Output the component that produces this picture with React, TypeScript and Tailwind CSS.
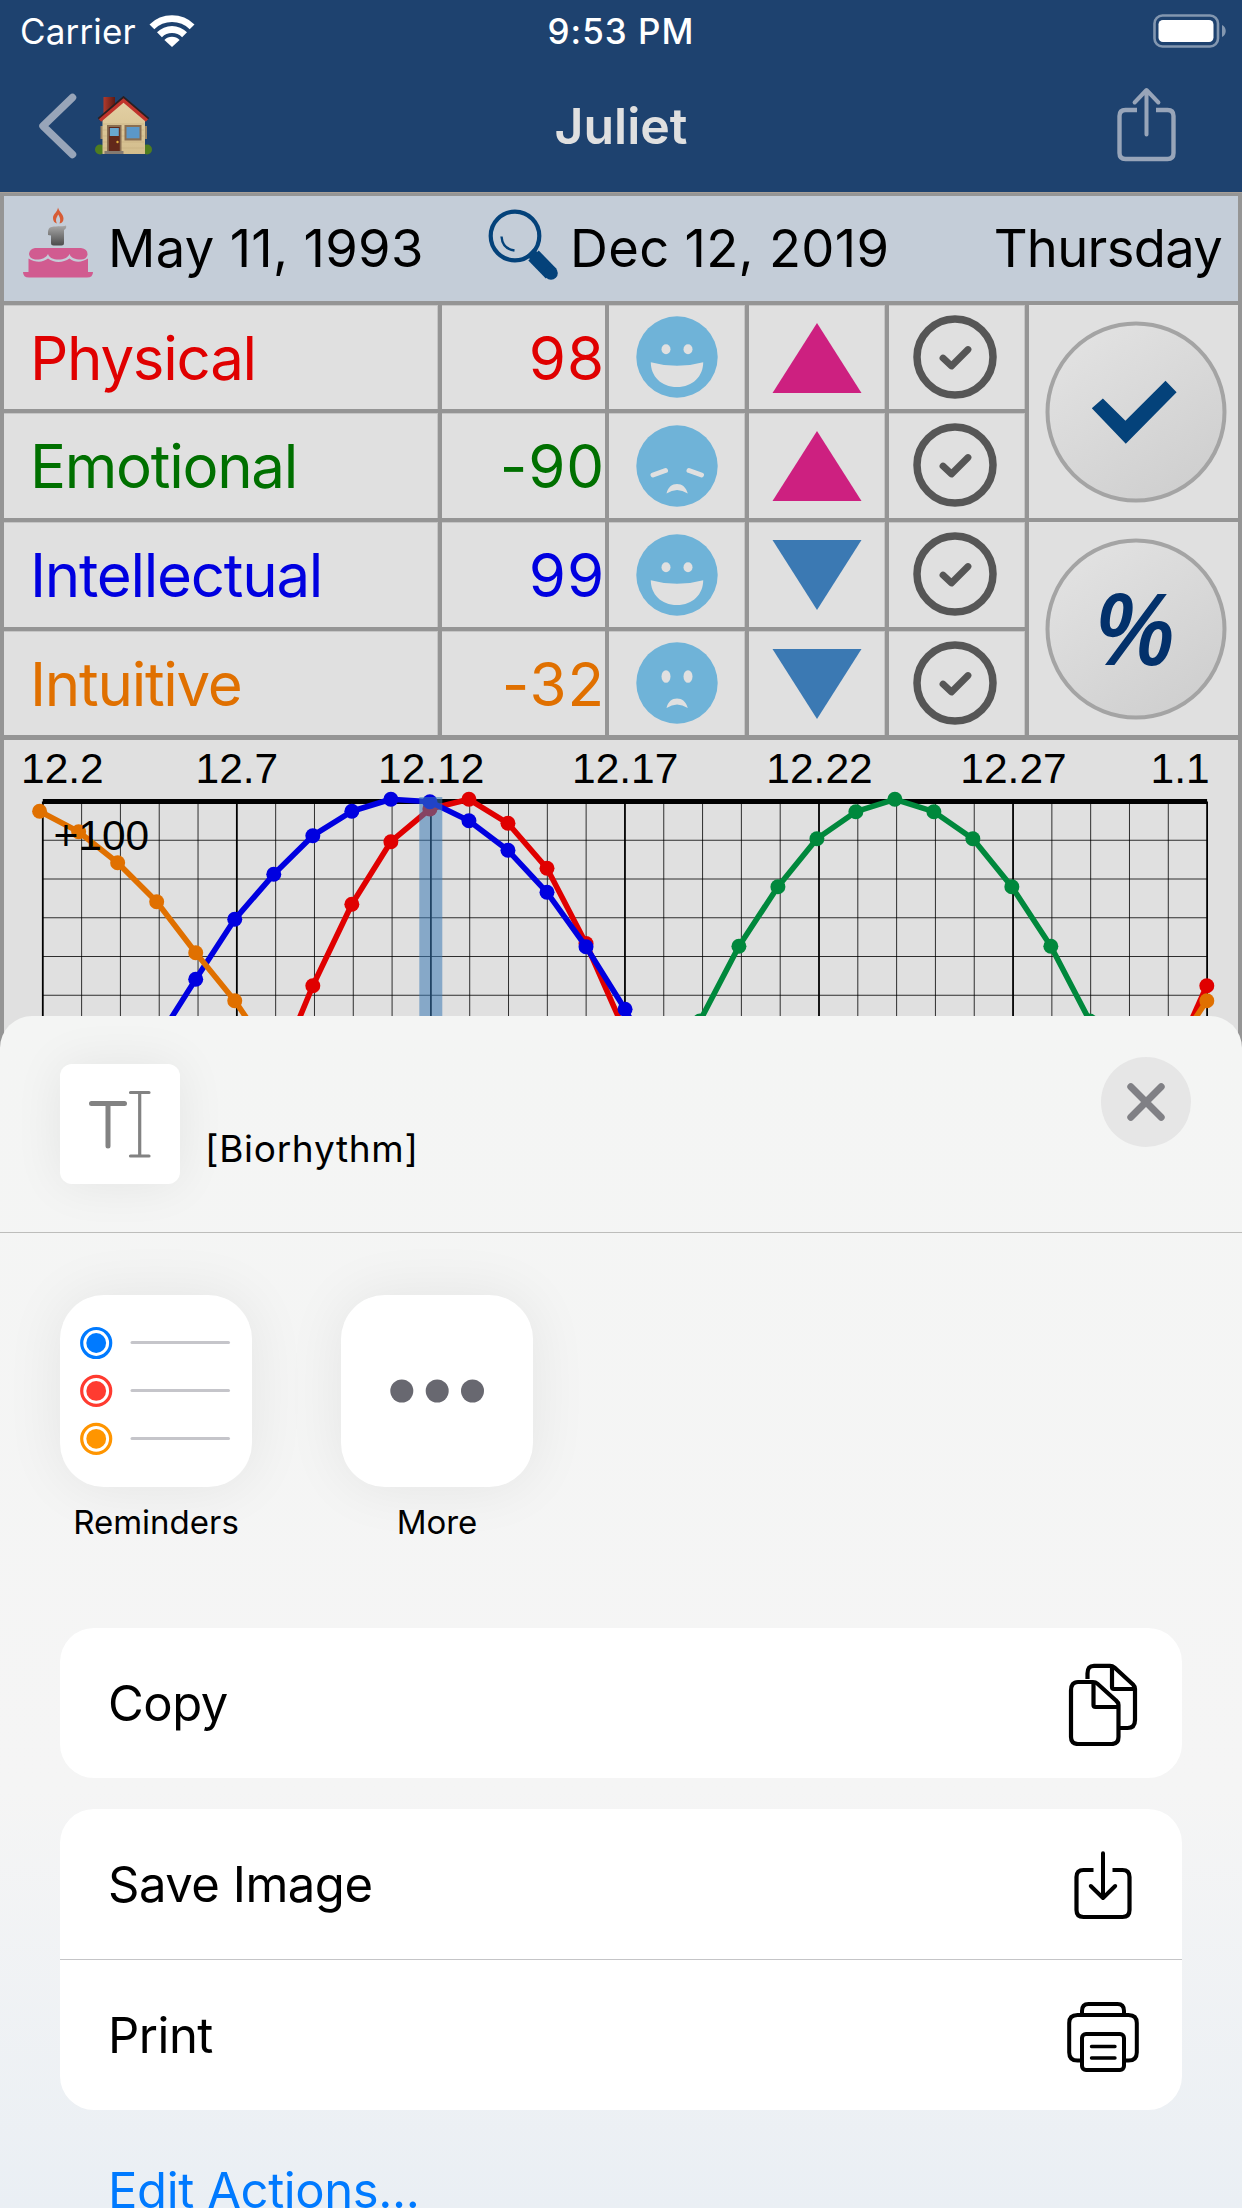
import { ReactNode } from "react";

type Mood = "happy" | "upset" | "sad";

interface Rhythm {
  name: string;
  value: number;
  color: string;
  mood: Mood;
  rising: boolean;
}

const RHYTHMS: Rhythm[] = [
  { name: "Physical", value: 98, color: "text-[#e00000]", mood: "happy", rising: true },
  { name: "Emotional", value: -90, color: "text-[#007000]", mood: "upset", rising: true },
  { name: "Intellectual", value: 99, color: "text-[#0000e0]", mood: "happy", rising: false },
  { name: "Intuitive", value: -32, color: "text-[#e07000]", mood: "sad", rising: false },
];

// Chart geometry, in the chart's own pixels
const CHART_LEFT = 42.8;
const DAY_WIDTH = 38.81;
const TOP_LINE = 61.5;

const DATE_LABELS = [
  { text: "12.2", x: 21 },
  { text: "12.7", x: 195.5 },
  { text: "12.12", x: 378 },
  { text: "12.17", x: 572 },
  { text: "12.22", x: 766.3 },
  { text: "12.27", x: 960.3 },
  { text: "1.1", x: 1150.5 },
];

// Each series starts at day `from`; values are y positions
const SERIES = [
  { color: "#e00000", from: 6, ys: [340, 245.7, 164.3, 101.7, 69, 59.3, 83.3, 128.3, 203.5, 292] },
  { color: "#e00000", from: 29, ys: [333, 245.7] },
  { color: "#00883c", from: 17, ys: [281, 206.3, 146.7, 98.7, 71.7, 59.3, 71.7, 98.7, 146.7, 206.3, 281, 366] },
  { color: "#0000e0", from: 3, ys: [301, 239.3, 179.3, 134.3, 95.7, 71.3, 59.3, 61.7, 80.7, 110.3, 152.3, 206.7, 269.3, 335] },
  { color: "#e07000", from: 0, ys: [71.3, 91.7, 122.7, 161.7, 212.7, 260.7, 318] },
  { color: "#e07000", from: 29, ys: [320, 260.7] },
];

// Points are pinned to both ends of the axis, slightly off the grid
const dayX = (day: number) => (day < 16 ? 39.6 + 39.03 * day : 1206.8 - 38.99 * (30 - day));

function Wifi() {
  return (
    <svg width="46" height="34" viewBox="0 0 46 34" fill="none">
      <path d="M0.5 11.5a31.8 31.8 0 0 1 45 0l-4.8 4.8a25 25 0 0 0-35.4 0z" fill="#fff" />
      <path d="M8 19.3a21.2 21.2 0 0 1 30 0l-4.9 4.9a14.3 14.3 0 0 0-20.2 0z" fill="#fff" />
      <path d="M15.4 27a10.8 10.8 0 0 1 15.2 0L23 34z" fill="#fff" />
    </svg>
  );
}

function Battery() {
  return (
    <svg width="74" height="34" viewBox="0 0 74 34" fill="none">
      <rect x="1.5" y="1.5" width="63.5" height="31" rx="8" stroke="#8397b0" strokeWidth="2.6" />
      <rect x="5.5" y="6" width="55" height="22" rx="4.5" fill="#fff" />
      <path d="M69 11c5 2 5 10 0 12z" fill="#8397b0" />
    </svg>
  );
}

function House() {
  return (
    <svg width="60" height="60" viewBox="0 0 60 60">
      <defs>
        <linearGradient id="wall" x1="0" y1="0" x2="0" y2="1">
          <stop offset="0" stopColor="#e3d0a4" />
          <stop offset="1" stopColor="#d3bd8c" />
        </linearGradient>
        <linearGradient id="chimney" x1="0" y1="0" x2="1" y2="0">
          <stop offset="0" stopColor="#b23a2c" />
          <stop offset="1" stopColor="#5c1a14" />
        </linearGradient>
      </defs>
      <rect x="9.5" y="1" width="11.5" height="17" fill="url(#chimney)" />
      <circle cx="6" cy="53.5" r="5" fill="#4f7d1f" />
      <circle cx="53" cy="53.5" r="5" fill="#4f7d1f" />
      <rect x="6.5" y="30" width="3" height="13" fill="#9b8463" />
      <rect x="50" y="30" width="3" height="13" fill="#9b8463" />
      <path d="M8.5 22L29.5 4L51 22V58H8.5z" fill="url(#wall)" />
      <path d="M9 28h41M9 34h41M9 40h41M9 46h41M9 52h41" stroke="#c6af80" strokeWidth="0.6" />
      <path d="M5 23.5L29.5 2.5L54 23.5" fill="none" stroke="#2b1f20" strokeWidth="4" />
      <path d="M6 24.5L29.5 4.5L53 24.5" fill="none" stroke="#c0342c" strokeWidth="3.6" />
      <rect x="13" y="29" width="14.5" height="26" fill="#8a6f52" />
      <rect x="14.8" y="31" width="11" height="24" fill="#62281a" />
      <rect x="15.8" y="32" width="9" height="8" fill="#69a8cf" />
      <circle cx="23.5" cy="46" r="1.2" fill="#e0ae3c" />
      <rect x="30.5" y="29" width="17" height="15.5" fill="#8a6f52" />
      <rect x="32.5" y="31" width="13" height="11.3" fill="#5b98c9" />
      <rect x="10.5" y="55" width="19" height="3" fill="#857a70" />
    </svg>
  );
}

function ShareIcon() {
  return (
    <svg width="60" height="76" viewBox="0 0 60 76" fill="none" stroke="#98a5b9" strokeWidth="4.4">
      <path d="M21 24H9.5Q3.5 24 3.5 30V67Q3.5 73 9.5 73H51.5Q57.5 73 57.5 67V30Q57.5 24 51.5 24H40" />
      <path d="M30.5 48.5V5M18.6 16.5L30.5 4L42.4 16.5" strokeWidth="4" strokeLinecap="round" strokeLinejoin="round" />
    </svg>
  );
}

function Cake() {
  return (
    <svg width="70" height="71" viewBox="0 0 70 71">
      <defs>
        <linearGradient id="candle" x1="0" y1="0" x2="0" y2="1">
          <stop offset="0" stopColor="#a8a8a8" />
          <stop offset="1" stopColor="#4c4c4c" />
        </linearGradient>
      </defs>
      <path d="M35 0.5C36 5 40.5 7 40.5 11.5C40.5 14.5 39 16 36.5 16.5C38 13 37 10.5 35.3 7.5C33.5 10.500 32 13 34 16.5C31.5 16 30 14 30 11C30 7 34.5 5 35 0.5z" fill="#d75c35" />
      <path d="M27 20.5C31 18.5 39 20 43 18.5Q44 21 41 23V36Q41 38.5 38.5 38.5H30.5Q28 38.5 28 36V28.5L25 28Q24.5 22 27 20.5z" fill="url(#candle)" />
      <path d="M12 41H58Q65 42 64.5 48Q63 52.5 58 52.5C52 52.5 48 51 46.5 47C44.5 51 41 52.5 35.5 52.5C30 52.5 26.5 51 25 47C23 51 18 53 12 52.5Q6.5 51.5 6 47Q6.5 42 12 41z" fill="#d15b90" />
      <path d="M5.5 51.5C13 56 20 55.5 25 51.5C31 56 40 56 46.5 51.5C52 56 59 55.5 65 51.5V65H70Q70 70.5 64 70.5H6Q0 70.5 0 65H5.5z" fill="#d15b90" />
    </svg>
  );
}

function Magnifier() {
  return (
    <svg width="72" height="72" viewBox="0 0 72 72" fill="none" stroke="#04427a">
      <circle cx="27" cy="27" r="24.3" strokeWidth="4.2" />
      <path d="M13.5 27.5Q14.5 40 26.5 41.5" strokeWidth="2.4" />
      <path d="M45.5 46.500L63 64.5" strokeWidth="14.5" />
      <circle cx="63" cy="64" r="6.8" fill="#04427a" stroke="none" />
      <path d="M42 43L47 48" strokeWidth="10" />
    </svg>
  );
}

function Face({ mood }: { mood: Mood }) {
  return (
    <svg width="82" height="82" viewBox="0 0 82 82" fill="#e0e0e0">
      <circle cx="41" cy="41" r="40.7" fill="#6fb3d8" />
      {mood === "happy" && (
        <>
          <ellipse cx="30" cy="33.3" rx="4.5" ry="5" />
          <ellipse cx="52" cy="33.3" rx="4.5" ry="5" />
          <path d="M14.800 46.2Q41 53.5 67.2 46.2C67.2 60 57 71 41 71C25 71 14.8 60 14.8 46.2z" />
        </>
      )}
      {mood === "upset" && (
        <>
          <path d="M17 50L29.5 45.5M65.5 50L53 45.5" stroke="#e0e0e0" strokeWidth="5" strokeLinecap="round" />
          <path d="M30.5 68.5C32 62 36 59 41 59C46 59 50 62 51.8 68.5Q41 61.5 30.5 68.5z" />
        </>
      )}
      {mood === "sad" && (
        <>
          <ellipse cx="30" cy="34.5" rx="4.5" ry="6.3" />
          <ellipse cx="52" cy="34.5" rx="4.5" ry="6.3" />
          <path d="M30.5 66C32 59.5 36 56.5 41 56.5C46 56.5 50 59.5 51.8 66Q41 59 30.5 66z" />
        </>
      )}
    </svg>
  );
}

function Trend({ rising }: { rising: boolean }) {
  return (
    <svg width="90" height="70" viewBox="0 0 90 70">
      {rising ? <path d="M45 0L89.5 70H0.5z" fill="#cd2080" /> : <path d="M45 70L89.5 0H0.5z" fill="#3b79b3" />}
    </svg>
  );
}

function CheckRing() {
  return (
    <svg width="84" height="84" viewBox="0 0 84 84" fill="none" stroke="#565656">
      <circle cx="42" cy="42" r="38" strokeWidth="7.5" />
      <path d="M30 43L38.5 51L55 34.5" strokeWidth="6.8" strokeLinecap="round" strokeLinejoin="round" />
    </svg>
  );
}

function RoundButton({ children }: { children: ReactNode }) {
  return (
    <svg className="ml-[5px] mt-px" width="182" height="182" viewBox="0 0 182 182">
      <defs>
        <linearGradient id="knob" x1="0.2" y1="0.1" x2="0.8" y2="0.95">
          <stop offset="0" stopColor="#e1e1e1" />
          <stop offset="1" stopColor="#cfcfcf" />
        </linearGradient>
      </defs>
      <circle cx="91" cy="91" r="88.5" fill="url(#knob)" stroke="#a4a4a4" strokeWidth="4" />
      {children}
    </svg>
  );
}

function Chart() {
  const days = Array.from({ length: 31 }, (_, i) => i);
  const right = CHART_LEFT + DAY_WIDTH * 30;
  return (
    <svg width="1234" height="320" viewBox="4 0 1234 320" className="block bg-[#e0e0e0]">
      {days.map((d) => (
        <path
          key={d}
          d={`M${CHART_LEFT + DAY_WIDTH * d} ${TOP_LINE}V320`}
          stroke="#000"
          strokeWidth={d % 5 === 0 ? 1.8 : 0.8}
        />
      ))}
      {[1, 2, 3, 4, 5, 6].map((n) => (
        <path key={n} d={`M${CHART_LEFT} ${TOP_LINE + 38.75 * n}H${right}`} stroke="#000" strokeWidth="0.8" />
      ))}
      <path d={`M${CHART_LEFT} ${TOP_LINE}H${right}`} stroke="#000" strokeWidth="5" />
      {SERIES.map((s, i) => (
        <g key={i} fill={s.color}>
          <polyline
            points={s.ys.map((y, j) => `${dayX(s.from + j)},${y}`).join(" ")}
            fill="none"
            stroke={s.color}
            strokeWidth="5.6"
            strokeLinejoin="round"
          />
          {s.ys.map((y, j) => (
            <circle key={j} cx={dayX(s.from + j)} cy={y} r="7.5" />
          ))}
        </g>
      ))}
      <rect x="419.3" y="57" width="23" height="263" fill="#3c7ab4" fillOpacity="0.55" />
      <g fontFamily="'Liberation Sans', sans-serif" fontSize="42.5">
        {DATE_LABELS.map((l) => (
          <text key={l.text} x={l.x} y="43.3">
            {l.text}
          </text>
        ))}
        <text x="53.5" y="110">+100</text>
      </g>
    </svg>
  );
}

function CopyIcon() {
  return (
    <svg width="76" height="84" viewBox="0 0 76 84" fill="none" stroke="#000" strokeWidth="4.2" strokeLinejoin="round">
      <path d="M24.5 17V11.5Q24.5 3.8 31 3.8H47Q49.5 3.8 51.5 5.5L70 22.5Q72 24.5 72 27V58Q72 66 64.5 66H56" />
      <path d="M49 5V25Q49 27 51 27H71" />
      <path d="M8 28.5Q8 20 15 20H30Q32.5 20 34.5 21.8L53 38.5Q55.5 40.5 55.5 43V75Q55.5 82 48.5 82H15Q8 82 8 75z" />
      <path d="M30.5 21V43Q30.5 45 32.5 45H54.5" />
    </svg>
  );
}

function SaveIcon() {
  return (
    <svg width="60" height="72" viewBox="0 0 60 72" fill="none" stroke="#000" strokeWidth="4.2">
      <path d="M20.5 21H10.5Q3.5 21 3.5 28V61Q3.5 68 10.5 68H49.5Q56.5 68 56.5 61V28Q56.5 21 49.5 21H39.5" />
      <path d="M30 4.2V48.5M17.8 37L30 49L42.2 37" strokeWidth="4" strokeLinecap="round" strokeLinejoin="round" />
    </svg>
  );
}

function PrintIcon() {
  return (
    <svg width="72" height="70" viewBox="0 0 72 70" fill="none" stroke="#000" strokeWidth="4">
      <path d="M15 12V9Q15 2 21.5 2H50.5Q57 2 57 9V12" />
      <path d="M15 58.5H10.5Q2.2 58.5 2.2 50.5V21Q2.2 13 10.5 13H61.5Q69.8 13 69.8 21V50.5Q69.8 58.5 61.5 58.5H57" />
      <rect x="15" y="32" width="42" height="36" rx="4" />
      <path d="M24.5 44.5H48M24.5 56H48" strokeWidth="3.4" strokeLinecap="round" />
    </svg>
  );
}

function ActionRow({ label, icon, slot }: { label: string; icon: ReactNode; slot: string }) {
  return (
    <div className="flex h-[150px] items-center justify-between pl-12">
      <span className="text-[49px] leading-none tracking-[-0.01em]">{label}</span>
      <span className={slot}>{icon}</span>
    </div>
  );
}

function ShareTile({ label, children }: { label: string; children: ReactNode }) {
  return (
    <div className="flex w-[192px] flex-col items-center">
      <div className="flex h-48 w-48 items-center justify-center rounded-[44px] bg-white shadow-[0_0_60px_rgba(0,0,0,0.07)]">
        {children}
      </div>
      <span className="mt-[15px] text-[33px] leading-10">{label}</span>
    </div>
  );
}

export default function App() {
  return (
    <div className="flex h-[2208px] w-[1242px] flex-col overflow-hidden bg-[#959595] font-['Inter',sans-serif] text-black">
      {/* Status bar + navigation */}
      <header className="h-[193px] shrink-0 border-b border-[#a8a098] bg-[#1e426f]">
        <div className="grid h-[62px] grid-cols-3 items-center px-5 text-white">
          <div className="flex items-center gap-[13px]">
            <span className="text-[35px] leading-none tracking-[0.005em]">Carrier</span>
            <span className="-mt-0.5"><Wifi /></span>
          </div>
          <span className="text-center text-[35px] font-medium leading-none tracking-[0.028em]">9:53 PM</span>
          <span className="-mr-[5px] flex justify-end"><Battery /></span>
        </div>
        <div className="grid h-32 grid-cols-3 items-center px-[37px]">
          <div className="flex items-center gap-[17px]">
            <svg width="40" height="66" viewBox="0 0 40 66" fill="none">
              <path d="M35.5 4.5L6 33L35.5 61.5" stroke="#98a5b9" strokeWidth="7.5" strokeLinecap="round" strokeLinejoin="round" />
            </svg>
            <House />
          </div>
          <span className="text-center text-[50px] font-semibold leading-none text-[#e0e0e0]">Juliet</span>
          <span className="-mt-[5px] mr-[29px] flex justify-end"><ShareIcon /></span>
        </div>
      </header>

      {/* Dates */}
      <div className="mx-1 mt-[3px] flex h-[105px] shrink-0 items-center bg-[#c4cdd8] text-[52.5px] leading-none tracking-[0.006em]">
        <div className="flex w-[484px] items-center pl-[19px]">
          <span className="-mt-3"><Cake /></span>
          <span className="ml-[15px]">May 11, 1993</span>
        </div>
        <div className="flex items-center">
          <span className="-mt-2"><Magnifier /></span>
          <span className="ml-[10px]">Dec 12, 2019</span>
        </div>
        <span className="ml-auto pr-4 tracking-[-0.013em]">Thursday</span>
      </div>

      {/* Rhythm table */}
      <div className="mx-1 mt-1 flex h-[430px] shrink-0 gap-1">
        <div className="grid w-[1021px] grid-cols-[434px_163px_136px_136px_136px] grid-rows-[104px_105px_105px_104px] gap-1">
          {RHYTHMS.map((r) => (
            <div key={r.name} className="contents">
              <div className={`flex items-center border-r border-t border-[#c6c6c6] bg-[#e0e0e0] pl-[26px] text-[60px] leading-none tracking-[-0.021em] ${r.color}`}>
                {r.name}
              </div>
              <div className={`flex items-center justify-end border-t border-[#c6c6c6] bg-[#e0e0e0] text-[60px] leading-none tracking-[0.015em] ${r.color}`}>
                {r.value}
              </div>
              <div className="flex items-center justify-center border-r border-t border-[#c6c6c6] bg-[#e0e0e0] pb-px">
                <Face mood={r.mood} />
              </div>
              <div className="flex items-center justify-center border-r border-t border-[#c6c6c6] bg-[#e0e0e0]">
                <Trend rising={r.rising} />
              </div>
              <div className="flex items-center justify-center border-r border-t border-[#c6c6c6] bg-[#e0e0e0] pb-0.5 pr-[3px]">
                <CheckRing />
              </div>
            </div>
          ))}
        </div>
        <div className="grid w-[209px] grid-rows-2 gap-1">
          <div className="flex items-center justify-center bg-[#e0e0e0]">
            <RoundButton>
              <path d="M46.8 87.2L57.9 77.5L80.4 99.8L120.5 59.8L131.6 71.2L80.8 122.8z" fill="#04427a" />
            </RoundButton>
          </div>
          <div className="flex items-center justify-center bg-[#e0e0e0]">
            <RoundButton>
              <text x="89.5" y="127" textAnchor="middle" fontFamily="'Open Sans', sans-serif" fontSize="99" fontWeight="600" fontStyle="italic" fill="#03316b">
                %
              </text>
            </RoundButton>
          </div>
        </div>
      </div>

      {/* Biorhythm curves, partly covered by the share sheet */}
      <div className="mx-1 mt-[5px] h-[320px] shrink-0">
        <Chart />
      </div>

      {/* Share sheet */}
      <section className="relative -mt-11 flex h-[1192px] shrink-0 flex-col rounded-t-[32px] bg-linear-to-b from-[#f4f5f4] via-[#f5f5f5] via-65% to-[#eaeff4]">
        <div className="flex h-[217px] shrink-0 border-b border-[#bdbdbb] pl-[60px] pr-[51px]">
          <div className="mt-12 flex h-[120px] w-[120px] items-center justify-center rounded-xl bg-white shadow-[0_0_50px_rgba(0,0,0,0.07)]">
            <svg width="64" height="68" viewBox="0 0 64 68" fill="none" stroke="#828282" strokeLinecap="round">
              <path d="M3.5 13.6H36.5M20 13.6V56" strokeWidth="5" />
              <path d="M42.5 2.5H61M42.5 66H61M51.7 2.5V66" strokeWidth="3.2" />
            </svg>
          </div>
          <span className="ml-[25px] mt-[111px] text-[37px] leading-[44px] tracking-[0.019em]">[Biorhythm]</span>
          <div className="ml-auto mt-[41px] flex h-[90px] w-[90px] items-center justify-center rounded-full bg-[#e6e6e6]">
            <svg width="38" height="38" viewBox="0 0 38 38" stroke="#808085" strokeWidth="7" strokeLinecap="round">
              <path d="M3.8 3.8L34.2 34.2M34.2 3.8L3.8 34.2" />
            </svg>
          </div>
        </div>

        <div className="flex gap-[89px] pl-[60px] pt-[62px]">
          <ShareTile label="Reminders">
            <svg width="192" height="192" viewBox="0 0 192 192">
              {["#007aff", "#ff3b30", "#ff9500"].map((color, i) => (
                <g key={color}>
                  <circle cx="36.2" cy={48 + i * 47.9} r="14.5" fill="none" stroke={color} strokeWidth="3.2" />
                  <circle cx="36.2" cy={48 + i * 47.9} r="9.9" fill={color} />
                  <path d={`M72 ${47.5 + i * 48}H168.5`} stroke="#c5c5ca" strokeWidth="3" strokeLinecap="round" />
                </g>
              ))}
            </svg>
          </ShareTile>
          <ShareTile label="More">
            <svg width="96" height="24" viewBox="0 0 96 24" fill="#686870">
              <circle cx="12.8" cy="12" r="11.5" />
              <circle cx="48.2" cy="12" r="11.5" />
              <circle cx="83.5" cy="12" r="11.5" />
            </svg>
          </ShareTile>
        </div>

        <div className="mx-[60px] mt-[86px] rounded-[34px] bg-white">
          <ActionRow label="Copy" icon={<CopyIcon />} slot="mr-[43px] mt-0.5" />
        </div>
        <div className="mx-[60px] mt-[31px] rounded-[34px] bg-white">
          <ActionRow label="Save Image" icon={<SaveIcon />} slot="mr-[49px] mt-0.5" />
          <div className="h-px bg-[#c5c5c7]" />
          <ActionRow label="Print" icon={<PrintIcon />} slot="mr-[43px] mt-1" />
        </div>
        <span className="ml-[108px] mt-[51px] text-[49px] leading-[60px] tracking-[-0.008em] text-[#007aff]">Edit Actions...</span>
      </section>
    </div>
  );
}
